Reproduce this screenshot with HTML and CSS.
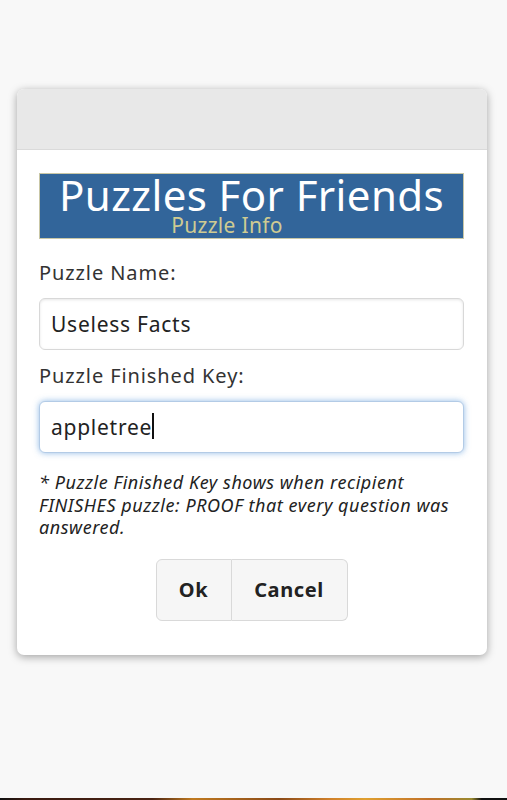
FILE: index.html
```html
<!DOCTYPE html>
<html lang="en">
  <head>
    <meta charset="UTF-8" />
    <meta name="viewport" content="width=device-width, initial-scale=1.0" />
    <title>Puzzle Info</title>
    <link rel="stylesheet" href="styles.css">
  </head>
  <body>
    <div class="page">
      <div class="dialog">
        <div class="dialog-header"></div>
        <div class="dialog-content">
          <div class="banner">
            <div class="banner-title">Puzzles For Friends</div>
            <div class="banner-sub">Puzzle Info</div>
          </div>

          <form id="puzzleForm">
            <div class="form-group">
              <label for="puzzleName">Puzzle Name:</label>
              <input type="text" id="puzzleName" name="puzzleName" value="Useless Facts" />
            </div>

            <div class="form-group">
              <label for="finishedKey">Puzzle Finished Key:</label>
              <div class="input-wrap">
                <input type="text" id="finishedKey" name="finishedKey" value="appletree" class="focused" />
                <span class="caret"></span>
              </div>
            </div>

            <p class="note">
              * Puzzle Finished Key shows when recipient FINISHES puzzle: PROOF that every question was answered.
            </p>

            <div class="button-group">
              <button type="button" class="btn btn-ok">Ok</button>
              <button type="button" class="btn btn-cancel">Cancel</button>
            </div>
          </form>
        </div>
      </div>
      <div class="bottom-strip"></div>
    </div>
  </body>
</html>
```

FILE: styles.css
```css
body {
  font-family: "Noto Sans", "Open Sans", "DejaVu Sans", sans-serif;
  background-color: #f8f8f8;
  margin: 0;
  padding: 0;
}

.page {
  height: 800px;
  display: flex;
  flex-direction: column;
}

.dialog {
  margin: 89px 0 0 17px;
  width: 470px;
  background-color: white;
  border-radius: 7px;
  box-shadow: 0 2px 8px rgba(0, 0, 0, 0.35);
  overflow: hidden;
}

.dialog-header {
  height: 60px;
  background-color: #e8e8e8;
  border-bottom: 1px solid #dadada;
}

.dialog-content {
  padding: 23px 23px 34px 22px;
}

.banner {
  height: 64px;
  background-color: #32659a;
  border: 1px solid #c9c7a6;
  text-align: center;
}

.banner-title {
  color: white;
  font-size: 42px;
  line-height: 41px;
  letter-spacing: 0.4px;
}

.banner-sub {
  color: #cfcb92;
  font-size: 21px;
  line-height: 21px;
  letter-spacing: 0.3px;
  padding-right: 49px;
}

.form-group {
  margin-top: 20px;
}

.form-group + .form-group {
  margin-top: 12px;
}

label {
  display: block;
  font-size: 20px;
  letter-spacing: 0.9px;
  color: #333;
  margin-bottom: 12px;
}

input[type="text"] {
  width: 100%;
  height: 52px;
  padding: 0 11px;
  border: 1px solid #d8d8d8;
  border-radius: 6px;
  font-family: inherit;
  font-size: 21px;
  letter-spacing: 0.75px;
  color: #222;
  box-sizing: border-box;
  box-shadow: inset 0 1px 3px rgba(0, 0, 0, 0.1);
}

.input-wrap {
  position: relative;
}

input.focused {
  border-color: #b3cbe6;
  box-shadow: 0 0 6px rgba(56, 132, 210, 0.55);
  outline: none;
}

.caret {
  position: absolute;
  left: 113px;
  top: 12px;
  width: 2px;
  height: 26px;
  background-color: #111;
}

.note {
  margin: 18px 0 0;
  font-size: 18px;
  font-style: italic;
  letter-spacing: 0.55px;
  line-height: 22.5px;
  color: #222;
}

.button-group {
  display: flex;
  justify-content: center;
  margin-top: 20px;
}

.btn {
  font-family: inherit;
  font-size: 20px;
  font-weight: 700;
  letter-spacing: 0.6px;
  color: #222;
  background-color: #f6f6f6;
  border: 1px solid #d9d9d9;
  height: 62px;
  padding: 0;
  cursor: pointer;
}

.btn-ok {
  width: 76px;
  border-radius: 6px 0 0 6px;
}

.btn-cancel {
  width: 116px;
  border-left: none;
  border-radius: 0 6px 6px 0;
}

.bottom-strip {
  margin-top: auto;
  height: 2px;
  background: linear-gradient(90deg, #111 0%, #3a1a10 5%, #4a2414 30%, #c07a20 38%, #8a4a18 55%, #d0802a 65%, #e0a030 72%, #c07028 85%, #9a8a30 93%, #111 95%, #111 100%);
}
```
